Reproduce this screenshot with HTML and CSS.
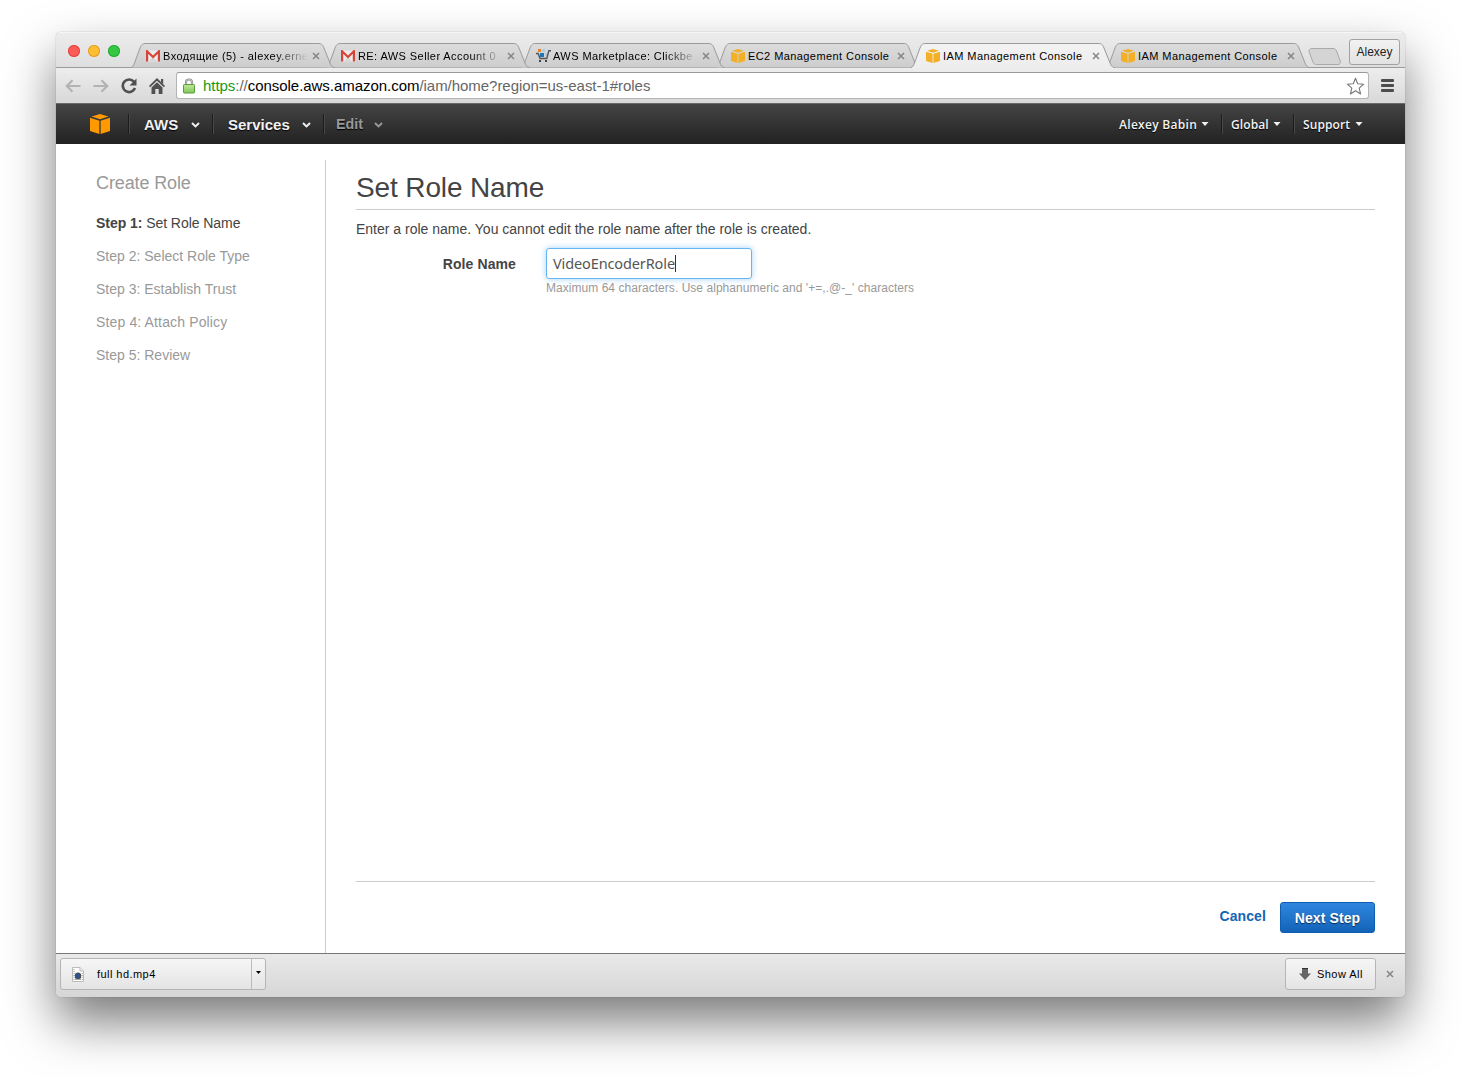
FILE: index.html
```html
<!DOCTYPE html>
<html lang="en">
<head>
<meta charset="utf-8">
<title>IAM Management Console</title>
<link rel="stylesheet" href="styles.css">
</head>
<body>
<svg class="defs" width="0" height="0">
  <defs>
    <linearGradient id="tabFill" x1="0" y1="0" x2="0" y2="1"><stop offset="0" stop-color="#dcdcdc"/><stop offset="1" stop-color="#cdcdcd"/></linearGradient>
    <linearGradient id="activeFill" x1="0" y1="0" x2="0" y2="1"><stop offset="0" stop-color="#f3f3f3"/><stop offset="1" stop-color="#ededed"/></linearGradient>
    <linearGradient id="lockFill" x1="0" y1="0" x2="0" y2="1"><stop offset="0" stop-color="#bfe89a"/><stop offset="1" stop-color="#7fc858"/></linearGradient>
    <symbol id="tab" viewBox="0 0 208 25"><path d="M0 24.5 C1.500 24.500 2.500 22.500 3.500 20 L9 5 C10.500 1.500 11.500 .5 15 .5 H187 C190.500 .5 191.500 1.500 193 5 L199 20 C200 22.500 201 24.500 203.500 24.500" stroke="#9b9b9b"/></symbol>
    <symbol id="mail" viewBox="0 0 14 12"><path d="M0 .5h14v11H0z" fill="#ececec"/><path d="M3 11.500 7 7l4 4.500z" fill="#d6d6d6"/><path d="M1.100 11.500V1.300L7 7l5.900-5.700v10.200" fill="none" stroke="#d6453a" stroke-width="2.200"/></symbol>
    <symbol id="cube" viewBox="0 0 20 20"><path d="M10 0 18.500 2.600 10 5.300 1.500 2.600zM0 3.800l9.400 2.900V20L0 17zM20 3.800v13.200L10.600 20V6.700z"/></symbol>
    <symbol id="close" viewBox="0 0 8 8"><path d="M1 1l6 6M7 1 1 7" stroke="#858585" stroke-width="1.500"/></symbol>
    <symbol id="chev" viewBox="0 0 9 6"><path d="M1 1l3.500 3.500L8 1" fill="none" stroke="currentColor" stroke-width="1.900"/></symbol>
    <symbol id="caret" viewBox="0 0 8 4"><path d="M.500 0h7L4 4z" fill="currentColor"/></symbol>
  </defs>
</svg>

<div class="window">
  <header class="tabstrip">
    <div class="lights"><i class="red"></i><i class="yellow"></i><i class="green"></i></div>
    <div class="tabs">
      <div class="tab t1"><svg class="shape"><use href="#tab"/></svg><svg class="mail"><use href="#mail"/></svg><span class="label fade cyr">Входящие (5) - alexey.erne</span><svg class="x"><use href="#close"/></svg></div>
      <div class="tab t2"><svg class="shape"><use href="#tab"/></svg><svg class="mail"><use href="#mail"/></svg><span class="label fade">RE: AWS Seller Account 0</span><svg class="x"><use href="#close"/></svg></div>
      <div class="tab t3"><svg class="shape"><use href="#tab"/></svg><svg class="cart" viewBox="0 0 15 14"><path d="M2 0h3v3H2z" fill="#f0831e"/><path d="M6 0h3v3H6zM9 4h2v3H9z" fill="#a9cfe8"/><path d="M4 4h4v4H4z" fill="#1c77b8"/><path d="M0 4.500h2.200l1.800 5h6.800l2-7.700H15" fill="none" stroke="#555" stroke-width="1.400"/><path d="M3 11h2v2H3zM9 11h2v2H9z" fill="#444"/></svg><span class="label fade">AWS Marketplace: Clickbe</span><svg class="x"><use href="#close"/></svg></div>
      <div class="tab t4"><svg class="shape"><use href="#tab"/></svg><svg class="fav"><use href="#cube"/></svg><span class="label">EC2 Management Console</span><svg class="x"><use href="#close"/></svg></div>
      <div class="tab active"><svg class="shape"><use href="#tab"/></svg><svg class="fav"><use href="#cube"/></svg><span class="label">IAM Management Console</span><svg class="x"><use href="#close"/></svg></div>
      <div class="tab t6"><svg class="shape"><use href="#tab"/></svg><svg class="fav"><use href="#cube"/></svg><span class="label">IAM Management Console</span><svg class="x"><use href="#close"/></svg></div>
    </div>
    <svg class="newtab" viewBox="0 0 33 17"><path d="M4 .5h21c2 0 3 1 3.600 2.500l3.600 10c.700 2-.200 3.500-2.200 3.500H8.500c-2 0-3-1-3.600-2.500L1.200 4C.500 2 1.500.5 4 .5z" fill="#d4d4d4" stroke="#a9a9a9"/></svg>
    <div class="profile">Alexey</div>
  </header>

  <div class="toolbar">
    <svg class="back" viewBox="0 0 16 14"><path d="M15.500 7H2M7.500 1.300 1.800 7l5.700 5.700" fill="none" stroke="#b3b3b3" stroke-width="2.200"/></svg>
    <svg class="fwd" viewBox="0 0 16 14"><path d="M.500 7H14M8.500 1.300 14.200 7l-5.700 5.700" fill="none" stroke="#b3b3b3" stroke-width="2.200"/></svg>
    <svg class="reload" viewBox="0 0 16 16"><path d="M13 3.800A6.300 6.300 0 1 0 14 10" fill="none" stroke="#505050" stroke-width="2.600"/><path d="M15.500.500v7H8.500z" fill="#505050"/></svg>
    <svg class="home" viewBox="0 0 16 16"><path d="M8 0 16 8l-1.200 1.200L8 2.700 1.200 9.200 0 8zM12 1h2.200v5L12 3.800zM8 4.200l5.500 5.200V16H9.700v-5H6.300v5H2.500V9.400z" fill="#505050"/></svg>
    <div class="omnibox">
      <svg class="lock" viewBox="0 0 12 16"><path d="M3 8V4.500a3 3 0 0 1 6 0V8" fill="none" stroke="#8c8c8c" stroke-width="2.200"/><path d="M3 8V4.500a3 3 0 0 1 6 0V8" fill="none" stroke="#ddd" stroke-width=".7"/><rect x=".5" y="6.500" width="11" height="8.500" rx=".8" fill="url(#lockFill)" stroke="#589a3d"/></svg>
      <span class="url"><b>https</b>://<em>console.aws.amazon.com</em>/iam/home?region=us-east-1#roles</span>
      <svg class="star" viewBox="0 0 19 18"><path d="M9.500 1.200l2.200 5.500 6 .500-4.500 3.900 1.400 5.900-5.100-3.200L4.400 17l1.400-5.900L1.300 7.200l6-.500z" fill="#fff" stroke="#777" stroke-width="1.100" stroke-linejoin="round"/></svg>
    </div>
    <div class="menu"><i></i><i></i><i></i></div>
  </div>

  <nav class="awsnav">
    <svg class="logo"><use href="#cube"/></svg>
    <div class="item aws">AWS <svg class="chev"><use href="#chev"/></svg></div>
    <div class="item services">Services <svg class="chev"><use href="#chev"/></svg></div>
    <div class="item edit">Edit <svg class="chev"><use href="#chev"/></svg></div>
    <div class="right">
      <div class="sub user">Alexey Babin <svg class="caret"><use href="#caret"/></svg></div>
      <div class="sub global">Global <svg class="caret"><use href="#caret"/></svg></div>
      <div class="sub support">Support <svg class="caret"><use href="#caret"/></svg></div>
    </div>
  </nav>

  <div class="page">
    <aside class="steps">
      <h2>Create Role</h2>
      <ol>
        <li class="current"><b>Step 1:</b> Set Role Name</li>
        <li>Step 2: Select Role Type</li>
        <li>Step 3: Establish Trust</li>
        <li class="attach">Step 4: Attach Policy</li>
        <li>Step 5: Review</li>
      </ol>
    </aside>
    <main class="main">
      <h1>Set Role Name</h1>
      <p class="intro">Enter a role name. You cannot edit the role name after the role is created.</p>
      <div class="field">
        <div class="name">Role Name</div>
        <div class="control">
          <div class="input"><span>VideoEncoderRole</span><i class="cursor"></i></div>
          <div class="hint">Maximum 64 characters. Use alphanumeric and '+=,.@-_' characters</div>
        </div>
      </div>
      <footer class="actions"><a class="cancel">Cancel</a><div class="next">Next Step</div></footer>
    </main>
  </div>

  <div class="shelf">
    <div class="download">
      <svg class="file" viewBox="0 0 12 15"><path d="M.5.5h7.500l3.500 3.500v10.500H.5z" fill="#fff" stroke="#bbb"/><path d="M8 .5V4h3.500" fill="#eee" stroke="#bbb"/><path d="M2 2v12M10.200 6v8" stroke="#999" stroke-dasharray="1 1"/><circle cx="6" cy="8.800" r="2.900" fill="#29568f" stroke="#444"/><path d="M3 12h6" stroke="#555"/></svg>
      <span class="fname">full hd.mp4</span>
      <div class="drop"><svg viewBox="0 0 5 3"><path d="M0 0h5L2.500 3z"/></svg></div>
    </div>
    <div class="showall"><svg viewBox="0 0 12 12"><path d="M3 0h6v5.500h3L6 12 0 5.500h3z" fill="#666"/><path d="M3 0h6v1H3z" fill="#333"/></svg>Show All</div>
    <svg class="x"><use href="#close"/></svg>
  </div>
</div>
</body>
</html>
```
FILE: styles.css
```css
* { box-sizing: border-box; }
body { margin: 0; height: 1077px; padding: 32px 56px 0; background: #fff; overflow: hidden; font-family: "Liberation Sans", Arial, sans-serif; font-size: 14px; color: #444; }
.defs { position: absolute; }
svg { display: block; flex: none; }
.window { width: 1349px; height: 965px; display: flex; flex-direction: column; border-radius: 5px; overflow: hidden; background: #fff; box-shadow: 0 0 1px rgba(0,0,0,.5), 0 25px 50px rgba(0,0,0,.52); }

.tabstrip { height: 36px; flex: none; display: flex; align-items: flex-end; background: linear-gradient(#ececec, #dedede); border-top: 1px solid #f6f6f6; box-shadow: inset 0 -1px #9b9b9b; }
.lights { display: flex; gap: 8px; padding: 0 0 11px 12px; width: 75px; }
.lights i { width: 12px; height: 12px; border-radius: 50%; }
.red { background: #fc5b57; box-shadow: inset 0 0 0 1px #e2463f; }
.yellow { background: #fdbe33; box-shadow: inset 0 0 0 1px #e0a028; }
.green { background: #35c941; box-shadow: inset 0 0 0 1px #27aa35; }
.tabs { display: flex; }
.tab { position: relative; isolation: isolate; width: 208px; height: 25px; margin-right: -13px; display: flex; align-items: center; padding-left: 15px; fill: url(#tabFill); }
.tab .shape { position: absolute; left: 0; top: 0; width: 208px; height: 25px; z-index: -1; }
.t1 { z-index: 6; } .t2 { z-index: 5; } .t3 { z-index: 4; } .t4 { z-index: 3; } .t6 { z-index: 2; }
.active { z-index: 9; fill: url(#activeFill); }
.active::after { content: ""; position: absolute; left: 1px; right: 6px; bottom: 0; height: 1px; background: #ededed; }
.mail { width: 14px; height: 12px; margin-right: 3px; }
.cart { width: 15px; height: 14px; margin-right: 2px; }
.fav { width: 14px; height: 14px; margin-right: 3px; fill: #f3b027; }
.label { width: 146px; padding-top: 2px; font-size: 11px; letter-spacing: .42px; line-height: 23px; color: #000; white-space: nowrap; }
.fade { -webkit-mask-image: linear-gradient(90deg, #000 112px, transparent 145px); mask-image: linear-gradient(90deg, #000 112px, transparent 145px); }
.x { width: 8px; height: 8px; margin-left: 3px; }
.newtab { width: 33px; height: 17px; margin: 0 0 3px 7px; }
.profile { margin: 0 5px 3px auto; width: 51px; height: 26px; border: 1px solid #a2a2a2; border-radius: 3px; background: linear-gradient(#f2f2f2, #e2e2e2); font-size: 12px; line-height: 25px; text-align: center; color: #222; }

.toolbar { height: 35px; flex: none; display: flex; align-items: center; background: linear-gradient(#ededed, #d8d8d8); padding: 0 11px 0 9px; }
.back, .fwd { width: 16px; height: 14px; margin-right: 12px; }
.reload { width: 16px; height: 16px; margin-right: 12px; }
.home { width: 16px; height: 16px; margin-right: 11px; }
.omnibox { flex: 1; height: 27px; display: flex; align-items: center; background: #fff; border: 1px solid #b4b4b4; border-top-color: #999; border-radius: 3px; padding: 0 3px 0 6px; }
.lock { width: 12px; height: 16px; margin-right: 8px; }
.url { font-size: 15px; letter-spacing: -.04px; color: #666; }
.url b { font-weight: 400; color: #159a12; }
.url em { font-style: normal; color: #000; }
.star { width: 19px; height: 18px; margin-left: auto; }
.menu { display: grid; gap: 2px; margin-left: 12px; }
.menu i { width: 13px; height: 3px; background: #4c4c4c; border-radius: 1px; }

.awsnav { height: 41px; flex: none; display: flex; align-items: center; background: linear-gradient(#444, #222); border-top: 1px solid #6a6a6a; padding-left: 34px; color: #f2f2f2; text-shadow: 0 1px 1px #000; }
.logo { width: 20px; height: 20px; fill: #f90; margin-right: 18px; }
.item { height: 20px; display: flex; align-items: center; justify-content: space-between; font-size: 15px; font-weight: 700; border-left: 1px solid #1c1c1c; box-shadow: inset 1px 0 #484848; padding: 0 12px 0 15px; }
.aws { width: 84px; } .services { width: 111px; } .edit { width: 72px; color: #999; font-size: 14.300px; padding-left: 12px; }
.chev { width: 9px; height: 6px; margin-top: 1px; }
.right { margin-left: auto; display: flex; padding-right: 30px; }
.sub { height: 20px; display: flex; align-items: center; justify-content: space-between; font: 600 12px "Open Sans", sans-serif; border-left: 1px solid #1c1c1c; box-shadow: inset 1px 0 #484848; padding: 0 12px 0 9px; letter-spacing: .1px; }
.sub:first-child { border: 0; box-shadow: none; }
.user { width: 111px; letter-spacing: .3px; } .global { width: 72px; } .support { width: 82px; }
.caret { width: 8px; height: 4px; }

.page { flex: 1; display: flex; padding-top: 16px; background: #fff; }
.steps { width: 270px; border-right: 1px solid #ccc; padding: 13px 0 0 40px; }
.steps h2 { margin: 0 0 20px; font-size: 18px; font-weight: 400; line-height: 20px; letter-spacing: -.12px; color: #999; }
.steps ol { list-style: none; margin: 0; padding: 0; display: grid; gap: 13px; }
.steps li { line-height: 20px; color: #999; }
.steps .attach { letter-spacing: .14px; }
.steps .current { color: #444; letter-spacing: -.05px; }
.main { flex: 1; margin: 0 30px; display: flex; flex-direction: column; }
h1 { margin: 0; height: 50px; border-bottom: 1px solid #ccc; font-size: 28px; font-weight: 400; line-height: 55px; letter-spacing: -.13px; }
.intro { margin: 9px 0 9px; line-height: 20px; }
.field { display: flex; }
.name { width: 160px; margin-right: 30px; text-align: right; font-weight: 700; line-height: 32px; letter-spacing: .1px; }
.input { width: 206px; height: 31px; border: 1px solid #66b4f0; border-radius: 3px; box-shadow: 0 0 6px rgba(102,180,240,.6); display: flex; align-items: center; padding-left: 6px; font: 14.500px "Noto Sans", sans-serif; letter-spacing: -.12px; color: #555; }
.input span { margin-top: -2px; }
.cursor { width: 1px; height: 17px; background: #333; }
.hint { font-size: 12px; line-height: 18px; color: #999; letter-spacing: .04px; white-space: nowrap; }
.actions { margin-top: auto; height: 72px; border-top: 1px solid #ccc; display: flex; justify-content: flex-end; padding-top: 20px; }
.cancel { color: #1466b3; font-weight: 700; line-height: 29px; letter-spacing: .1px; margin-right: 14px; }
.next { width: 95px; height: 31px; border: 1px solid #0e5db0; border-radius: 3px; background: linear-gradient(#2f86de, #1263b8); color: #fff; font-weight: 700; line-height: 31px; text-align: center; text-shadow: 0 1px 1px rgba(0,0,0,.6); letter-spacing: .1px; }

.shelf { height: 44px; flex: none; display: flex; align-items: flex-start; padding: 4px 11px 0 4px; border-top: 1px solid #777; background: linear-gradient(#e9e9e9, #d6d6d6); color: #000; font-size: 11px; }
.download, .showall { height: 32px; display: flex; align-items: center; border: 1px solid #b5b5b5; border-radius: 3px; background: linear-gradient(#f6f6f6, #e4e4e4); }
.download { width: 206px; padding-left: 11px; }
.file { width: 12px; height: 15px; margin-right: 13px; }
.fname { letter-spacing: .45px; }
.drop { margin-left: auto; width: 14px; height: 30px; border-left: 1px solid #bbb; padding: 12px 0 0 4px; }
.drop svg { width: 5px; height: 3px; }
.showall { margin-left: auto; width: 91px; padding-left: 13px; gap: 6px; letter-spacing: .45px; }
.showall svg { width: 12px; height: 12px; }
.shelf .x { margin: 12px 0 0 10px; }
```
